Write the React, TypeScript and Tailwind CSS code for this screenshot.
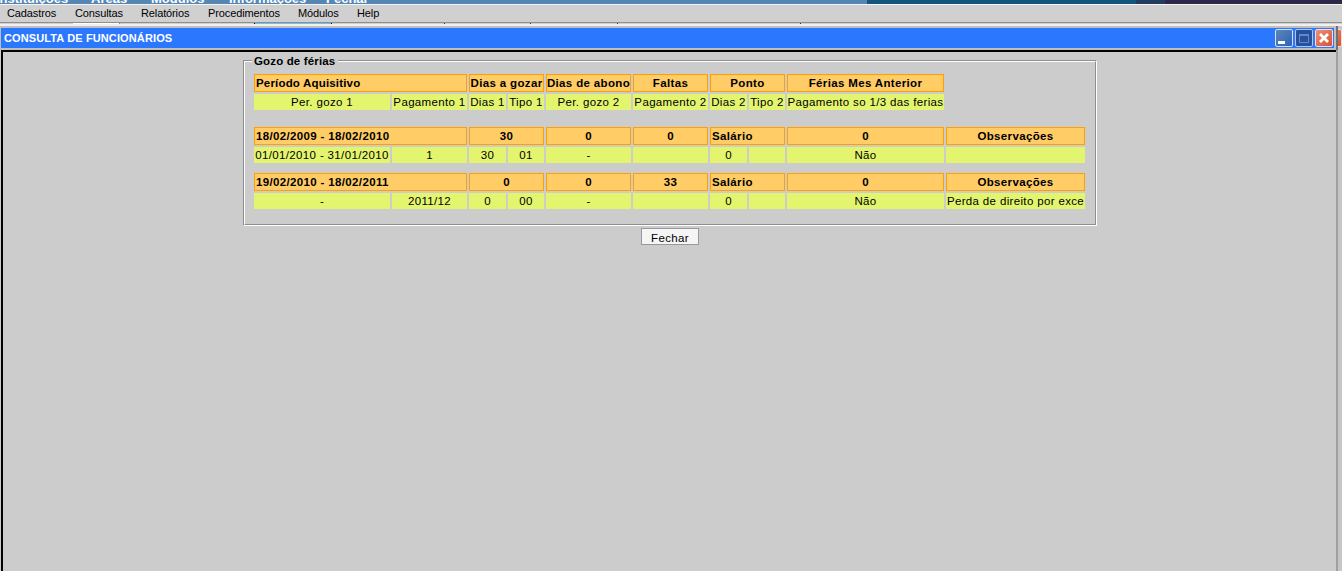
import type { ReactNode } from "react";

type BoxProps = { children?: ReactNode; className?: string };

function Head({ children, className = "text-center" }: BoxProps) {
  return (
    <div className={`h-[18px] border border-[#ffa000] bg-[#ffcc66] font-bold leading-[17px] ${className}`}>
      {children}
    </div>
  );
}

function Cell({ children }: { children?: ReactNode }) {
  return <div className="flex h-4 justify-center bg-[#e3f56f] leading-4">{children}</div>;
}

function Row({ children, className = "" }: BoxProps) {
  return (
    <div
      className={`grid grid-cols-[136px_75px_37px_36px_85px_75px_37px_36px_157px_139px] gap-[2px] ${className}`}
    >
      {children}
    </div>
  );
}

type Vacation = {
  period: string;
  days: string;
  bonus: string;
  absences: string;
  cells: string[];
};

const vacations: Vacation[] = [
  {
    period: "18/02/2009 - 18/02/2010",
    days: "30",
    bonus: "0",
    absences: "0",
    cells: ["01/01/2010 - 31/01/2010", "1", "30", "01", "-", "", "0", "", "Não", ""],
  },
  {
    period: "19/02/2010 - 18/02/2011",
    days: "0",
    bonus: "0",
    absences: "33",
    cells: ["-", "2011/12", "0", "00", "-", "", "0", "", "Não", "Perda de direito por exce"],
  },
];

const columns = [
  "Per. gozo 1",
  "Pagamento 1",
  "Dias 1",
  "Tipo 1",
  "Per. gozo 2",
  "Pagamento 2",
  "Dias 2",
  "Tipo 2",
  "Pagamento so 1/3 das ferias",
];

function MinimizeIcon() {
  return (
    <svg width="18" height="18" viewBox="0 0 18 18">
      <defs>
        <linearGradient id="min" x1="0" y1="0" x2="1" y2="1">
          <stop offset="0" stopColor="#5f86b8" />
          <stop offset="1" stopColor="#2c62b4" />
        </linearGradient>
      </defs>
      <rect x=".5" y=".5" width="17" height="17" rx="1.5" fill="url(#min)" stroke="#d3e0f4" />
      <path d="M3 12h7v3H3z" fill="#fff" />
    </svg>
  );
}

function MaximizeIcon() {
  return (
    <svg width="18" height="18" viewBox="0 0 18 18">
      <rect x=".5" y=".5" width="17" height="17" rx="1.5" fill="#28519a" stroke="#b4c6e6" />
      <path d="M4.5 5.5h9v8h-9z" fill="none" stroke="#5f88cf" />
      <path d="M4 6h10" stroke="#5f88cf" strokeWidth="2" />
    </svg>
  );
}

function CloseIcon({ className = "" }: { className?: string }) {
  return (
    <svg className={className} width="18" height="18" viewBox="0 0 18 18">
      <defs>
        <linearGradient id="close" x1="0" y1="0" x2="1" y2="1">
          <stop offset="0" stopColor="#e9937c" />
          <stop offset="1" stopColor="#d9502c" />
        </linearGradient>
      </defs>
      <rect x=".5" y=".5" width="17" height="17" rx="1.5" fill="url(#close)" stroke="#f6dcdc" />
      <path d="M5 5l8 8M13 5l-8 8" stroke="#fff" strokeWidth="2.8" />
    </svg>
  );
}

export default function App() {
  return (
    <div className="flex h-[571px] w-[1342px] flex-col overflow-hidden bg-[#cccccc] font-['Liberation_Sans',Arial,sans-serif] text-[11px] text-black">
      <div className="relative flex h-1 shrink-0 overflow-hidden">
        <div className="w-[867px] bg-[#5586b4]" />
        <div className="w-[269px] bg-[#12557f]" />
        <div className="w-[29px] bg-[#233c60]" />
        <div className="flex-1 bg-[#2d2847]" />
        <div className="absolute top-[-9px] left-[-4px] h-[15px] text-[13px] leading-[15px] font-bold whitespace-nowrap text-white">
          <span className="absolute left-0">Instituições</span>
          <span className="absolute left-[95px]">Áreas</span>
          <span className="absolute left-[155px]">Módulos</span>
          <span className="absolute left-[233px]">Informações</span>
          <span className="absolute left-[330px]">Fechar</span>
        </div>
      </div>
      <nav className="flex h-[19px] shrink-0 border-t border-b border-t-[#f4f4f4] border-b-[#8e8e8e] bg-[#d0d0d0] pl-[7px] leading-[17px] tracking-[-0.12px]">
        <span className="w-[68px]">Cadastros</span>
        <span className="w-[66px]">Consultas</span>
        <span className="w-[67px]">Relatórios</span>
        <span className="w-[90px]">Procedimentos</span>
        <span className="w-[59px]">Módulos</span>
        <span>Help</span>
      </nav>
      <div className="flex h-px shrink-0 bg-[#d0d0d0]">
        <div className="ml-[73px] w-[46px] bg-white" />
        <div className="w-px bg-[#888]" />
        <div className="ml-[134px] w-px bg-[#00007a]" />
        <div className="w-[76px] bg-[#6cc4ee]" />
        <div className="w-px bg-[#00007a]" />
        <div className="ml-[112px] w-px bg-[#333]" />
        <div className="ml-[85px] w-px bg-[#333]" />
        <div className="ml-[86px] w-px bg-[#333]" />
        <div className="ml-[182px] w-px bg-[#333]" />
      </div>
      <div className="h-[2px] shrink-0 bg-[#f0f0f0]" />
      <div className="flex min-h-0 flex-1">
        <div className="flex w-[1336px] flex-col">
          <div className="flex h-6 items-center border-y-2 border-r-2 border-l border-[#bfbfbf] bg-[#2b78ff] pl-[3px]">
            <h1 className="flex-1 text-[11px] leading-5 font-bold tracking-[0.12px] text-white">CONSULTA DE FUNCIONÁRIOS</h1>
            <div className="flex gap-[2px] pr-px">
              <MinimizeIcon />
              <MaximizeIcon />
              <CloseIcon />
            </div>
          </div>
          <main className="ml-px min-h-0 flex-1 border-t-2 border-l-2 border-black pt-2 pl-[240px]">
            <div className="h-[166px] w-[854px] border border-t-[#8e8e8e] border-r-white border-b-white border-l-[#8e8e8e]">
              <div className="h-full border border-t-white border-r-[#8e8e8e] border-b-[#8e8e8e] border-l-white">
                <div className="relative -mt-2 ml-[7px] h-4 w-[86px] bg-[#ccc] pl-[2px] text-[11.5px] leading-[14px] font-bold tracking-[0.15px]">
                  Gozo de férias
                </div>
                <div className="ml-[9px] pt-1 text-[11.5px] tracking-[0.35px] whitespace-nowrap">
                  <Row>
                    <Head className="col-span-2 pl-px tracking-[0.18px]">Período Aquisitivo</Head>
                    <Head className="col-span-2 flex justify-center">Dias a gozar</Head>
                    <Head className="flex justify-center">Dias de abono</Head>
                    <Head>Faltas</Head>
                    <Head className="col-span-2 text-center">Ponto</Head>
                    <Head>Férias Mes Anterior</Head>
                  </Row>
                  <Row className="mt-[2px] mb-[17px]">
                    {columns.map((c) => (
                      <Cell key={c}>{c}</Cell>
                    ))}
                  </Row>
                  {vacations.map((v) => (
                    <div key={v.period} className="mb-[10px]">
                      <Row className="mb-[2px]">
                        <Head className="col-span-2 pl-px">{v.period}</Head>
                        <Head className="col-span-2 text-center">{v.days}</Head>
                        <Head>{v.bonus}</Head>
                        <Head>{v.absences}</Head>
                        <Head className="col-span-2 pl-px">Salário</Head>
                        <Head>0</Head>
                        <Head>Observações</Head>
                      </Row>
                      <Row>
                        {v.cells.map((c, i) => (
                          <Cell key={i}>{c}</Cell>
                        ))}
                      </Row>
                    </div>
                  ))}
                </div>
              </div>
            </div>
            <button className="mt-[2px] ml-[398px] block h-[17px] w-[58px] border border-[#999] bg-[#f5f5f5] text-center text-[11.5px] leading-[18px] tracking-[0.35px]">
              Fechar
            </button>
          </main>
        </div>
        <div className="flex w-[2px] flex-col bg-[#9f9f9f]">
          <div className="h-6 bg-[#6f6f78]" />
        </div>
        <div className="w-1 overflow-hidden bg-[#c6c6c6] pt-[3px]">
          <CloseIcon className="-ml-[14px] max-w-none" />
        </div>
      </div>
    </div>
  );
}
